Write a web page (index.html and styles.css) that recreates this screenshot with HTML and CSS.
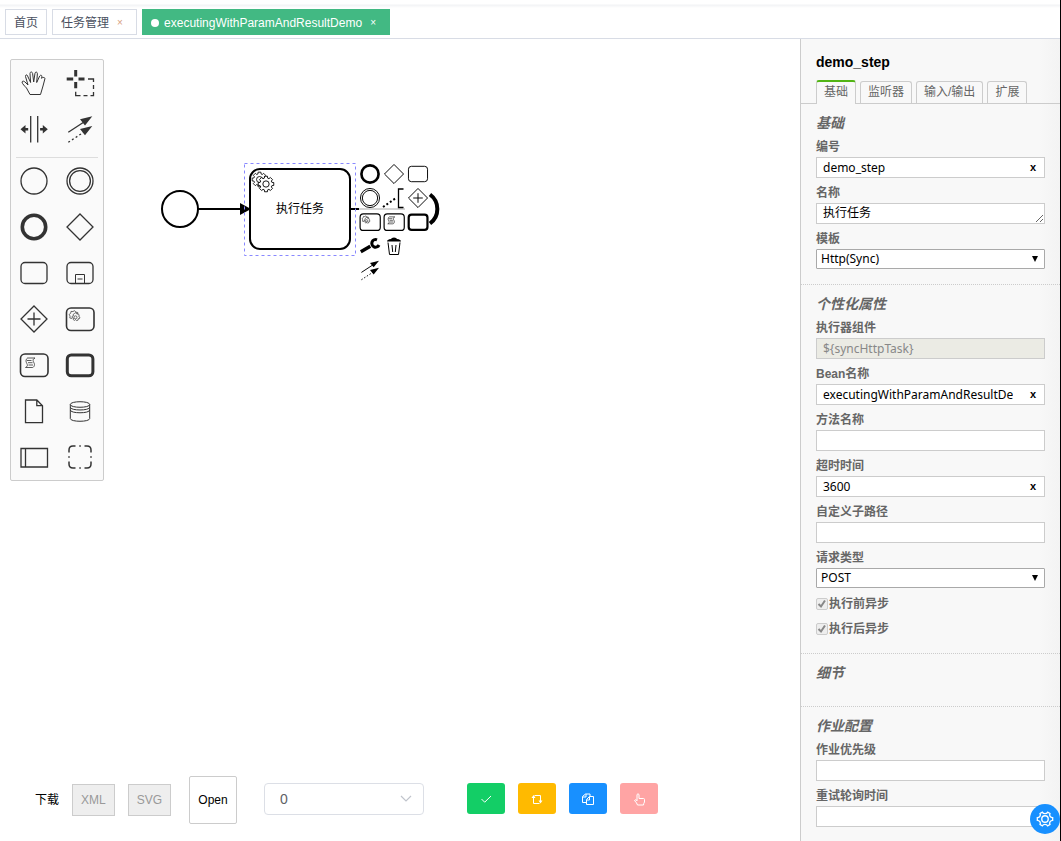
FILE: index.html
```html
<!DOCTYPE html>
<html lang="zh-CN">
<head>
<meta charset="utf-8">
<title>executingWithParamAndResultDemo</title>
<link rel="stylesheet" href="styles.css">
</head>
<body>
<svg class="sprite" aria-hidden="true">
  <symbol id="gear" viewBox="-8 -8 16 16"><path d="M5.2-1.5 6.9-1.3 6.9 1.3 5.2 1.5 4.7 2.6 5.8 3.9 3.9 5.8 2.6 4.7 1.5 5.2 1.3 6.9-1.3 6.9-1.5 5.2-2.6 4.7-3.9 5.8-5.8 3.9-4.7 2.6-5.2 1.5-6.9 1.3-6.9-1.3-5.2-1.5-4.7-2.6-5.8-3.9-3.9-5.8-2.6-4.7-1.5-5.2-1.3-6.9 1.3-6.9 1.5-5.2 2.6-4.7 3.9-5.8 5.8-3.9 4.7-2.6z"/><circle r="2.8"/></symbol>
  <symbol id="connect" viewBox="0 0 30 30"><path d="M3.3 18.3 19 8"/><path d="M3.3 28.3 19 18" stroke-dasharray="2 2.4"/><path class="solid" d="M27.3 2.3 15 5.3 20 11.4zM27.3 12 15 15 20 21.2z"/></symbol>
  <symbol id="start" viewBox="0 0 30 30"><circle cx="15" cy="15" r="13"/></symbol>
  <symbol id="intermediate" viewBox="0 0 30 30"><circle cx="15" cy="15" r="13"/><circle cx="15" cy="15" r="10.4"/></symbol>
  <symbol id="end" viewBox="0 0 30 30"><circle cx="15" cy="15" r="11.7" stroke-width="3.6"/></symbol>
  <symbol id="gateway" viewBox="0 0 30 30"><path d="M15 2 28 15 15 28 2 15z"/></symbol>
  <symbol id="gateway-plus" viewBox="0 0 30 30"><path d="M15 2 28 15 15 28 2 15zM15 8.500v13M8.500 15h13"/></symbol>
  <symbol id="task" viewBox="0 0 30 30"><rect x="2" y="4.500" width="26" height="21" rx="4"/></symbol>
  <symbol id="service" viewBox="0 0 30 30"><rect x="1.500" y="4" width="27.500" height="22.500" rx="4.500" stroke-width="1.600"/><g stroke-width=".7"><path d="M7 14.500 4.800 14l.3-2-1-1.500 1.600-1.200.3-1.900 2 .2 1.500-1 1.300 1.500 2 .4-.1 1.500"/><circle cx="10.500" cy="13.300" r="1.500"/><path d="m10 8.800 1.500.1.400 1.200 1.400-.2.900 1.300-.6 1.100 1.300.8-.4 1.500-1.300.1-.1 1.400-1.500.5-.9-1-1.300.8-1.200-.9.300-1.300-1.300-.5v-1.500l1.300-.5-.3-1.300 1.200-.8z"/></g></symbol>
  <symbol id="script" viewBox="0 0 30 30"><rect x="1.500" y="4" width="27.500" height="22.500" rx="4.500" stroke-width="1.600"/><path stroke-width=".8" d="M8.500 8h7.500c-4 2-.500 4.500-.500 6.500 0 1.500-1 3-2 3H6.500c4-2 .500-4 .500-6.500 0-1.500.8-2.500 1.500-3zM8 10.500h4.500M9 12.700h4.500M9.500 15h4.500"/></symbol>
  <symbol id="call" viewBox="0 0 30 30"><rect x="2.300" y="5" width="25.600" height="20.800" rx="4" stroke-width="3"/></symbol>
</svg>

<nav class="tabs-view">
  <a class="view-tab" href="#">首页</a>
  <a class="view-tab" href="#">任务管理<span class="view-close warm">×</span></a>
  <a class="view-tab current" href="#"><i class="dot"></i>executingWithParamAndResultDemo<span class="view-close">×</span></a>
</nav>

<div class="workspace">
  <main class="modeler">
    <div class="canvas">
      <svg class="diagram" width="460" height="260" role="img" aria-label="流程图">
        <g fill="none" stroke="#000" stroke-width="2">
          <circle cx="180" cy="170" r="18"/>
          <path d="M198 170h44M351 170h8"/>
          <path d="M359 170h46" stroke="#aaa" stroke-width="1"/>
          <rect x="250" y="130" width="100" height="80" rx="10" fill="#fff"/>
          <path d="M430 155.500a18 18 0 0 1 0 29" stroke-width="4"/>
        </g>
        <path d="m240 164 11 6-11 6z"/>
        <rect x="244.500" y="124.500" width="111" height="92" fill="none" stroke="#8888ff" stroke-dasharray="3 3"/>
        <g class="gears"><use href="#gear" x="251" y="132" width="17" height="17"/><use href="#gear" x="257" y="136" width="18" height="18"/></g>
        <text x="300" y="174" text-anchor="middle">执行任务</text>
      </svg>

      <div class="palette">
        <div class="entries">
          <button aria-label="手形工具"><svg class="thin" viewBox="0 0 30 30"><path d="M11 26.500 7.500 20C6 18.500 3 15.500 3 14c.7-1.500 2-.8 3 0l3 3L6.500 8.500C6.300 6.500 8 6.300 8.600 8l3 6.500L11 5.500c.1-2 2.300-2 2.600 0l1.100 8.500 1.300-8.800c.4-1.700 2.400-1.400 2.400.5l-.7 8.800 3-6.500c.8-1.300 2.400-.9 2.200.8l-.4 1.500c1-1.200 3.700-1.200 3.400.500L24 18l-2.500 8.500z"/></svg></button>
          <button aria-label="套索工具"><svg viewBox="0 0 30 30"><path stroke-width="3" d="M10.700 2v6.500M10.700 14v6.300M1.700 11h6.500M13.500 11h6"/><path d="M23 11h5.500v3M28.500 17v4M28.500 24v3.700h-3M22.500 27.700h-4M15.500 27.700h-4.800v-4"/></svg></button>
          <button aria-label="空间工具"><svg viewBox="0 0 30 30"><path d="M11.700 2v26.500M18.700 2v26.500"/><path class="solid" d="M1.500 15.300 6.500 11v3h2.700v2.600H6.500v3zM28.800 15.300 23.800 11v3h-2.700v2.600h2.700v3z"/></svg></button>
          <button aria-label="连接工具"><svg><use href="#connect"/></svg></button>
        </div>
        <hr>
        <div class="entries">
          <button aria-label="开始事件"><svg><use href="#start"/></svg></button>
          <button aria-label="中间事件"><svg><use href="#intermediate"/></svg></button>
          <button aria-label="结束事件"><svg><use href="#end"/></svg></button>
          <button aria-label="网关"><svg><use href="#gateway"/></svg></button>
          <button aria-label="任务"><svg><use href="#task"/></svg></button>
          <button aria-label="子流程"><svg viewBox="0 0 30 30"><use href="#task"/><path stroke-width="1" d="M10.500 25.500v-9h9v9M12.500 21h5"/></svg></button>
          <button aria-label="并行网关"><svg><use href="#gateway-plus"/></svg></button>
          <button aria-label="服务任务"><svg><use href="#service"/></svg></button>
          <button aria-label="脚本任务"><svg><use href="#script"/></svg></button>
          <button aria-label="调用活动"><svg><use href="#call"/></svg></button>
          <button aria-label="数据对象"><svg viewBox="0 0 30 30"><path d="M6.500 4h11.300l5.700 5.700v17h-17zM17.800 4v5.700h5.700"/></svg></button>
          <button aria-label="数据存储"><svg class="thin" viewBox="0 0 30 30"><path d="M5.300 8.500v14c0 3.700 19.400 3.700 19.400 0v-14M5.300 8.500c0-3.700 19.400-3.700 19.400 0s-19.400 3.700-19.400 0M5.300 11.200c0 3.700 19.400 3.700 19.400 0M5.300 14c0 3.700 19.400 3.700 19.400 0"/></svg></button>
          <button aria-label="池"><svg viewBox="0 0 30 30"><path d="M2 6.500h26.500v18.500H2zM6.500 6.500v18.500"/></svg></button>
          <button aria-label="分组"><svg viewBox="0 0 30 30"><path stroke-width="1.500" d="M4 10.500V8q0-4 4-4h2.500M19.500 4H22q4 0 4 4v2.500M26 19.500V22q0 4-4 4h-2.500M10.500 26H8q-4 0-4-4v-2.500M4 14.300v1.500M26 14.300v1.500M14.300 4h1.500M14.300 26h1.500"/></svg></button>
        </div>
      </div>

      <div class="context-pad">
        <button aria-label="追加结束事件"><svg><use href="#end"/></svg></button>
        <button aria-label="追加网关"><svg><use href="#gateway"/></svg></button>
        <button aria-label="追加任务"><svg><use href="#task"/></svg></button>
        <button aria-label="追加中间事件"><svg><use href="#intermediate"/></svg></button>
        <button aria-label="追加注释"><svg class="full" viewBox="0 0 24 24"><path d="M21.500 3h-5v18.500h5"/><path d="M1 21 14 12" stroke-width="2" stroke-dasharray="2 2.200"/></svg></button>
        <button aria-label="追加并行网关"><svg><use href="#gateway-plus"/></svg></button>
        <button aria-label="追加服务任务"><svg><use href="#service"/></svg></button>
        <button aria-label="追加脚本任务"><svg><use href="#script"/></svg></button>
        <button aria-label="追加调用活动"><svg><use href="#call"/></svg></button>
        <button aria-label="更改类型"><svg class="full" viewBox="0 0 24 24"><path d="m2.800 17.800 9.500-5.500" stroke-width="3.400"/><path d="M19 5.800a3.800 3.800 0 1 0 2 5.200" stroke-width="3"/></svg></button>
        <button aria-label="删除"><svg class="full thin" viewBox="0 0 24 24"><path d="M6 8.500 7.500 20.500h9L18 8.500M10 11l.700 7M14 11l-.700 7"/><path class="solid" d="M5 7.500q0-2 4-2.500.3-1.500 3-1.500t3 1.500q4 .5 4 2.500z"/></svg></button>
        <button class="row-start" aria-label="连接"><svg><use href="#connect"/></svg></button>
      </div>
    </div>

    <footer class="toolbar">
      <div class="downloads">
        <span>下载</span>
        <button class="export" disabled>XML</button>
        <button class="export" disabled>SVG</button>
        <button class="open">Open</button>
      </div>
      <div class="actions">
        <select class="version" aria-label="版本"><option>0</option></select>
        <div class="action-buttons">
          <button class="green" aria-label="确认"><svg viewBox="0 0 14 14"><path d="m2.500 7 3.200 3.200L12 4"/></svg></button>
          <button class="amber" aria-label="刷新"><svg viewBox="0 0 14 14"><path d="M3.500 5v6.500h6M4.500 3.500h6V10"/><path class="solid" d="M3.500 3 1.500 6h4zM10.500 11.500l-2-3h4z"/></svg></button>
          <button class="blue" aria-label="复制"><svg viewBox="0 0 14 14"><path d="M5 10.500H1.500v-6L4.500 2H9v2M1.500 5H5V2M5.500 12.500v-5l3-3h4v8zM5.500 8h3V4.500"/></svg></button>
          <button class="pink" aria-label="执行"><svg viewBox="0 0 14 14"><path d="M5 9V2.500q1-1.500 2 0v4h4.500q1 0 1 1V10q-1 1.500-1 3h-6Q5 11 2.500 8.500 2.500 7 5 8.500"/></svg></button>
        </div>
      </div>
    </footer>
  </main>

  <aside class="properties">
    <h1>demo_step</h1>
    <div class="prop-tabs">
      <a class="selected" href="#">基础</a><a href="#">监听器</a><a href="#">输入/输出</a><a href="#">扩展</a>
    </div>
    <section>
      <h2>基础</h2>
      <div class="field"><label for="id">编号</label><div class="box"><input id="id" value="demo_step"><button aria-label="清除">x</button></div></div>
      <div class="field"><label for="name">名称</label><textarea id="name" rows="1">执行任务</textarea></div>
      <div class="field"><label for="tpl">模板</label><select id="tpl"><option>Http(Sync)</option></select></div>
    </section>
    <section>
      <h2>个性化属性</h2>
      <div class="field"><label for="executor">执行器组件</label><div class="box off"><input id="executor" value="${syncHttpTask}" disabled></div></div>
      <div class="field"><label for="bean">Bean名称</label><div class="box"><input id="bean" value="executingWithParamAndResultDemo"><button aria-label="清除">x</button></div></div>
      <div class="field"><label for="method">方法名称</label><div class="box"><input id="method"></div></div>
      <div class="field"><label for="timeout">超时时间</label><div class="box"><input id="timeout" value="3600"><button aria-label="清除">x</button></div></div>
      <div class="field"><label for="path">自定义子路径</label><div class="box"><input id="path"></div></div>
      <div class="field"><label for="type">请求类型</label><select id="type"><option>POST</option></select></div>
      <div class="check"><input type="checkbox" id="before" checked disabled><label for="before">执行前异步</label></div>
      <div class="check"><input type="checkbox" id="after" checked disabled><label for="after">执行后异步</label></div>
    </section>
    <section class="details">
      <h2>细节</h2>
    </section>
    <section>
      <h2>作业配置</h2>
      <div class="field"><label for="priority">作业优先级</label><div class="box"><input id="priority"></div></div>
      <div class="field"><label for="retry">重试轮询时间</label><div class="box"><input id="retry"></div></div>
    </section>
  </aside>
</div>

<button class="settings" aria-label="设置"><svg viewBox="0 0 20 20"><path d="M7 2.300q1 1.700 3 1.700t3-1.700l2.500 1.500q-.8 1.700.2 3.200t2.800 1.500v3q-1.800 0-2.800 1.500t-.2 3.200L13 17.700q-1-1.700-3-1.700t-3 1.700l-2.500-1.500q.8-1.700-.2-3.200t-2.800-1.500v-3q1.800 0 2.800-1.500t.2-3.200z"/><circle cx="10" cy="10" r="3.600"/></svg></button>
</body>
</html>
```
FILE: styles.css
```css
* { box-sizing: border-box; }

body {
  margin: 0;
  height: 100vh;
  display: flex;
  flex-direction: column;
  overflow: hidden;
  border-right: 1px solid #000;
  background: #fff;
  font: 12px/16px "Liberation Sans", "Noto Sans CJK SC", sans-serif;
  color: #000;
}

button, input, select, textarea { font: inherit; color: inherit; margin: 0; }
button { padding: 0; border: 0; background: none; }
a { color: inherit; text-decoration: none; }
svg { display: block; fill: none; stroke: currentColor; stroke-width: 1.3; }
.thin { stroke-width: 1; }
.solid { fill: currentColor; stroke: none; }
.sprite { position: absolute; width: 0; height: 0; }

/* Open views */
.tabs-view {
  display: flex;
  gap: 5px;
  height: 39px;
  padding: 9px 5px 3px;
  border-bottom: 1px solid #d8dce5;
  background: linear-gradient(#fff 4px, #f2f3f5 5px, #fff 8px);
  flex: none;
}
.view-tab {
  display: flex;
  align-items: center;
  height: 26px;
  padding: 2px 8px 0;
  border: 1px solid #d8dce5;
  background: #fff;
  color: #495060;
}
.current { border-color: #42b983; background: #42b983; color: #fff; }
.dot { width: 8px; height: 8px; margin-right: 5px; border-radius: 50%; background: #fff; }
.view-close { width: 16px; margin-left: 3px; text-align: center; font-size: 10px; }
.warm { color: #d8a080; }

.workspace { flex: 1; display: flex; min-height: 0; }
.modeler { flex: 1; min-width: 0; display: flex; flex-direction: column; }
.canvas { flex: 1; min-height: 0; position: relative; }

.diagram { stroke: none; fill: #000; stroke-width: 1; }
.gears { fill: #fff; stroke: #000; stroke-width: .8; }

.palette {
  position: absolute;
  left: 10px;
  top: 20px;
  width: 94px;
  border: 1px solid #ccc;
  border-radius: 2px;
  background: #fafafa;
}
.entries { display: grid; grid-template-columns: repeat(2, 46px); }
.entries button { height: 46px; display: grid; place-items: center; color: #333; }
.entries svg { width: 30px; height: 30px; }
.palette hr { height: 6px; margin: 0 5px; border: 0; border-bottom: 1px solid #ddd; }

.context-pad {
  position: absolute;
  left: 358px;
  top: 123px;
  display: grid;
  grid-template-columns: repeat(3, 24px);
}
.context-pad button { height: 24px; display: grid; place-items: center; }
.context-pad svg { width: 22px; height: 22px; }
.context-pad .full { width: 24px; height: 24px; }
.row-start { grid-column: 1; }

/* Bottom toolbar */
.toolbar { display: flex; align-items: center; gap: 27px; padding: 0 35px 17px; }
.downloads { display: flex; align-items: center; gap: 13px; }
.export { height: 32px; padding: 0 8px; border: 1px solid #ccc; background: #eee; color: #999; }
.open { width: 48px; height: 48px; margin-left: 5px; border: 1px solid #ccc; border-radius: 2px; background: #fff; }
.actions { display: flex; align-items: center; gap: 43px; padding-bottom: 3px; }
.version {
  appearance: none;
  width: 160px;
  height: 32px;
  padding: 0 15px;
  border: 1px solid #dcdfe6;
  border-radius: 4px;
  background: #fff url("data:image/svg+xml,%3Csvg xmlns='http://www.w3.org/2000/svg' width='12' height='8' fill='none' stroke='%23c0c4cc' stroke-width='1.2'%3E%3Cpath d='m1 1 5 5 5-5'/%3E%3C/svg%3E") no-repeat right 11px center;
  color: #606266;
  font-size: 14px;
}
.action-buttons { display: flex; gap: 13px; }
.action-buttons button { display: grid; place-items: center; width: 38px; height: 31px; border-radius: 3px; color: #fff; }
.action-buttons svg { width: 14px; height: 14px; stroke-width: 1; }
.action-buttons .green { background: #13ce66; }
.action-buttons .amber { background: #ffba00; }
.action-buttons .blue { background: #1890ff; }
.action-buttons .pink { background: #ffa4a4; }

/* Properties panel */
.properties {
  width: 260px;
  flex: none;
  overflow: hidden;
  border-left: 1px solid #ccc;
  background: linear-gradient(90deg, #f8f8f8 92%, #f3f3f3);
  color: #666;
}
h1 { margin: 14px 15px 0; font-size: 14px; line-height: 18px; color: #000; }
.prop-tabs {
  display: flex;
  align-items: flex-end;
  gap: 4px;
  height: 33px;
  padding: 0 15px;
  border-bottom: 1px solid #ccc;
}
.prop-tabs a {
  height: 22px;
  padding: 0 7px;
  border: 1px solid #ccc;
  border-bottom: 0;
  border-radius: 3px 3px 0 0;
  line-height: 20px;
}
.prop-tabs .selected { height: 24px; margin-bottom: -1px; border-top: 2px solid #52b415; background: #f8f8f8; }

section { padding: 10px 15px 7px; }
section + section { border-top: 1px dotted #ccc; }
h2 { margin: 0 0 7px; font-size: 14px; line-height: 18px; font-style: italic; }
.details { min-height: 53px; }
.field { display: grid; grid-template-rows: 16px 21px; gap: 2px; margin-bottom: 7px; }
.field label, .check label { font-weight: bold; }
.field input, .field select, .field textarea {
  font-family: "Noto Sans", "Noto Sans CJK SC", sans-serif;
  color: #000;
}
.box { display: flex; border: 1px solid #ccc; background: #fff; }
.box input { flex: 1; min-width: 0; margin: 0 9px 0 6px; padding: 0; border: 0; background: none; outline: 0; }
.box button { width: 22px; color: #000; font-weight: bold; font-size: 11px; line-height: 19px; }
.box.off { background: #ebebe4; }
.box.off input { color: #888; }
textarea { width: 100%; height: 21px; padding: 0 6px; border: 1px solid #ccc; overflow: hidden; line-height: 18px; resize: both; }
.field select {
  appearance: none;
  height: 20px;
  padding: 0 4px;
  border: 1px solid #a9a9a9;
  border-radius: 1px;
  background: #fff url("data:image/svg+xml,%3Csvg xmlns='http://www.w3.org/2000/svg' width='6' height='6'%3E%3Cpath d='M0 0h6L3 6z'/%3E%3C/svg%3E") no-repeat right 6px center;
}
.check { display: flex; align-items: center; gap: 1px; height: 15px; margin-bottom: 10px; }
.check input {
  appearance: none;
  width: 12px;
  height: 12px;
  border: 1px solid #ccc;
  border-radius: 2px;
  background: #eee url("data:image/svg+xml,%3Csvg xmlns='http://www.w3.org/2000/svg' width='10' height='10' fill='none' stroke='%23888' stroke-width='2'%3E%3Cpath d='m1.500 5 2.500 2.500 4-6'/%3E%3C/svg%3E") no-repeat center;
}

.settings {
  position: fixed;
  right: 1px;
  bottom: 7px;
  display: grid;
  place-items: center;
  width: 30px;
  height: 30px;
  border-radius: 50%;
  background: #1890ff;
  color: #fff;
}
.settings svg { width: 18px; height: 18px; stroke-width: 1.5; }
```
